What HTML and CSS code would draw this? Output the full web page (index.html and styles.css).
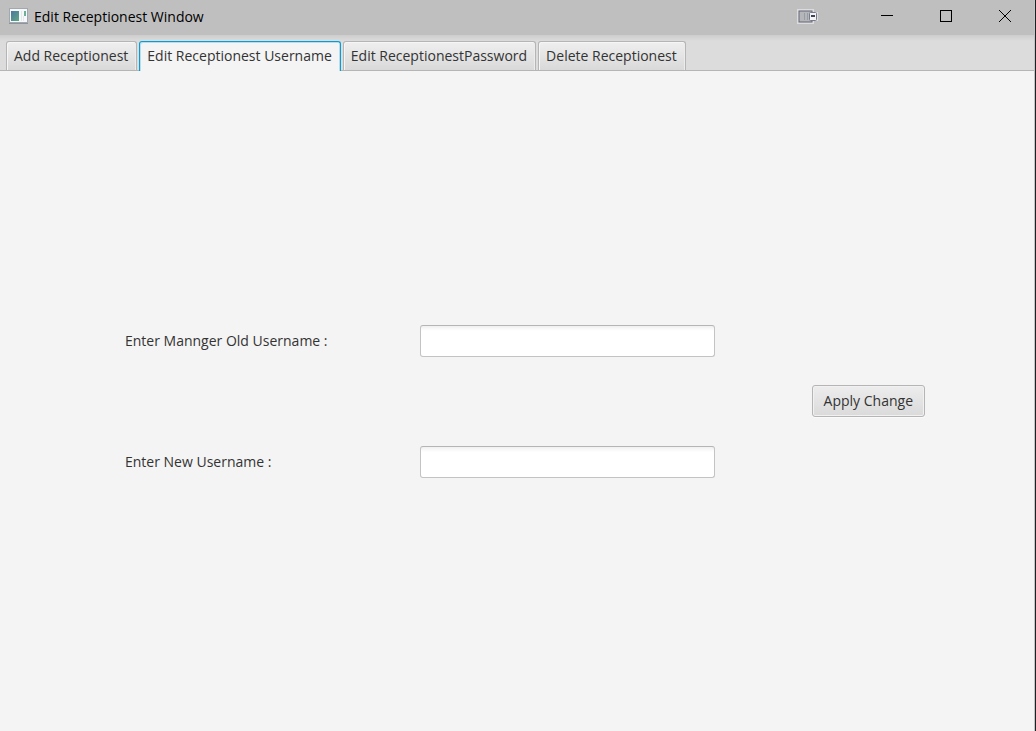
FILE: index.html
```html
<!DOCTYPE html>
<html lang="en">
<head>
<meta charset="utf-8">
<title>Edit Receptionest Window</title>
<link rel="stylesheet" href="styles.css">
</head>
<body>
<div class="window">
  <header class="titlebar">
    <svg class="app-icon" width="19" height="16" viewBox="0 0 19 16" aria-hidden="true">
      <defs>
        <linearGradient id="app-fill" x1="0" y1="0" x2="1" y2="1">
          <stop offset="0" stop-color="#4a78a0"/>
          <stop offset="1" stop-color="#5fa882"/>
        </linearGradient>
      </defs>
      <rect x="0.5" y="0.5" width="18" height="14" fill="#f6f8f9" stroke="#a3a8ae"/>
      <path d="M0 15.5H19" stroke="#8e949b"/>
      <rect x="2" y="3" width="8" height="10" fill="url(#app-fill)"/>
      <path d="M12.5 3V13M14.5 8V13" stroke="#e3e8ea"/>
      <rect x="15" y="3" width="2" height="5" fill="#6faf98"/>
    </svg>
    <h1 class="title">Edit Receptionest Window</h1>
    <svg class="device-icon" width="21" height="15" viewBox="0 0 21 15" aria-hidden="true">
      <path d="M0 0H17V3H21V12H17V15H0Z" fill="#dcdcdf"/>
      <rect x="2" y="2" width="13" height="11" fill="#b5b6b9" stroke="#626576"/>
      <path d="M7.5 4V11M10.5 4V11" stroke="#9a9ca4"/>
      <rect x="12.5" y="3.5" width="7" height="8" rx="1" fill="#f4f4f6" stroke="#777b8c"/>
      <rect x="14" y="6" width="4" height="2" fill="#3d4258"/>
    </svg>
    <div class="controls">
      <button class="control" type="button" aria-label="Minimize"><svg width="12" height="12" viewBox="0 0 12 12"><path d="M0 5.5H12"/></svg></button>
      <button class="control" type="button" aria-label="Maximize"><svg width="12" height="12" viewBox="0 0 12 12"><rect x="0.5" y="0.5" width="11" height="11"/></svg></button>
      <button class="control" type="button" aria-label="Close"><svg width="12" height="12" viewBox="0 0 12 12"><path d="M0 0L12 12M12 0L0 12"/></svg></button>
    </div>
  </header>
  <div class="tabs" role="tablist">
    <button class="tab" type="button" role="tab" aria-selected="false">Add Receptionest</button>
    <button class="tab tab-active" type="button" role="tab" aria-selected="true">Edit Receptionest Username</button>
    <button class="tab" type="button" role="tab" aria-selected="false">Edit ReceptionestPassword</button>
    <button class="tab" type="button" role="tab" aria-selected="false">Delete Receptionest</button>
  </div>
  <main class="panel">
    <form class="form">
      <label class="label" for="old-name">Enter Mannger Old Username :</label>
      <input class="field" id="old-name" type="text">
      <button class="apply" type="button">Apply Change</button>
      <label class="label" for="new-name">Enter New Username :</label>
      <input class="field" id="new-name" type="text">
    </form>
  </main>
</div>
</body>
</html>
```
FILE: styles.css
```css
* {
  box-sizing: border-box;
}

body {
  margin: 0;
  background: #1e2023;
  color: #333;
  font: 14px/20px "Open Sans", "Noto Sans", sans-serif;
}

button,
input {
  margin: 0;
  color: inherit;
  font: inherit;
}

.window {
  display: flex;
  flex-direction: column;
  min-height: 100vh;
  margin-right: 1px;
  border-right: 1px solid #c4c4c4;
  background: #f4f4f4;
}

.titlebar {
  display: flex;
  align-items: center;
  height: 35px;
  padding: 0 0 3px 9px;
  background: #bfbfbf;
}

.title {
  flex: 1;
  margin: 0 0 0 6px;
  padding-top: 2px;
  color: #000;
  font-size: 14px;
  font-weight: 400;
}

.device-icon {
  margin-right: 39px;
}

.controls {
  display: flex;
}

.control {
  display: grid;
  place-items: center;
  width: 59px;
  height: 32px;
  padding: 0;
  border: 0;
  background: none;
}

.control svg {
  fill: none;
  stroke: #000;
}

.tabs {
  display: flex;
  align-items: flex-end;
  gap: 2px;
  height: 36px;
  padding: 0 6px;
  border-bottom: 1px solid #b5b5b5;
  background: linear-gradient(#cdcdcd, #dcdcdc 6px);
}

.tab {
  height: 29px;
  padding: 0 8px 0 7px;
  border: 1px solid #b5b5b5;
  border-bottom: 0;
  border-radius: 3px 3px 0 0;
  background: linear-gradient(#efefef, #d9d9d9);
  box-shadow: inset 1px 1px #f6f6f6, inset -1px 0 #ececec;
  white-space: nowrap;
}

.tab-active {
  height: 30px;
  margin-bottom: -1px;
  padding-bottom: 2px;
  border-color: #039ed3;
  background: #f4f4f4;
  box-shadow: inset 1px 1px #b5dfee, inset -1px 0 #b5dfee;
}

.panel {
  display: flex;
  flex: 1;
  align-items: center;
  padding: 0 109px 0 125px;
}

.form {
  display: grid;
  flex: 1;
  grid-template-columns: 295fr 295fr 210fr;
  row-gap: 89px;
  align-items: center;
}

.field {
  width: 100%;
  height: 32px;
  padding: 0 8px;
  border: 1px solid #c3c3c3;
  border-top-color: #b5b5b5;
  border-radius: 3px;
  outline: 0;
  background: linear-gradient(#f0f0f0, #fff 5px);
}

.apply {
  grid-row: 1 / 3;
  grid-column: 3;
  justify-self: end;
  height: 32px;
  padding: 0 11px;
  border: 1px solid #b5b5b5;
  border-radius: 3px;
  background: linear-gradient(#ededed, #dadada);
  box-shadow: inset 0 0 0 1px #f1f1f1, 0 1px #fafafa;
}
```
